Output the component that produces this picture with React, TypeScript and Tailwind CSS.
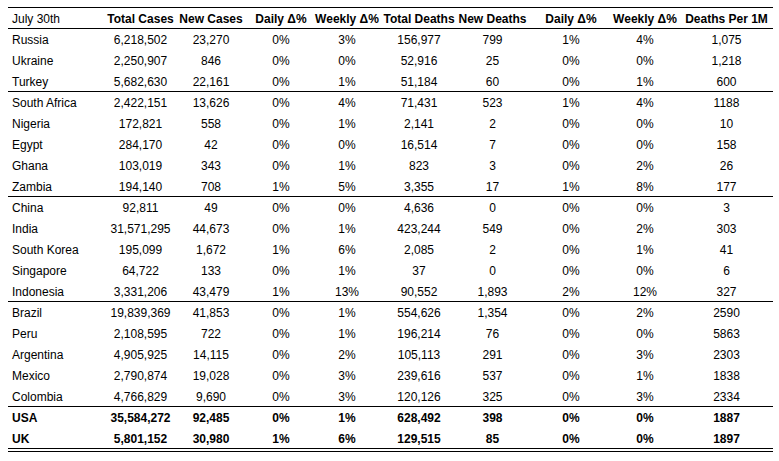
import React from "react";

type Row = [string, string, string, string, string, string, string, string, string, string];

const groups: Row[][] = [
  [
    ["Russia", "6,218,502", "23,270", "0%", "3%", "156,977", "799", "1%", "4%", "1,075"],
    ["Ukraine", "2,250,907", "846", "0%", "0%", "52,916", "25", "0%", "0%", "1,218"],
    ["Turkey", "5,682,630", "22,161", "0%", "1%", "51,184", "60", "0%", "1%", "600"],
  ],
  [
    ["South Africa", "2,422,151", "13,626", "0%", "4%", "71,431", "523", "1%", "4%", "1188"],
    ["Nigeria", "172,821", "558", "0%", "1%", "2,141", "2", "0%", "0%", "10"],
    ["Egypt", "284,170", "42", "0%", "0%", "16,514", "7", "0%", "0%", "158"],
    ["Ghana", "103,019", "343", "0%", "1%", "823", "3", "0%", "2%", "26"],
    ["Zambia", "194,140", "708", "1%", "5%", "3,355", "17", "1%", "8%", "177"],
  ],
  [
    ["China", "92,811", "49", "0%", "0%", "4,636", "0", "0%", "0%", "3"],
    ["India", "31,571,295", "44,673", "0%", "1%", "423,244", "549", "0%", "2%", "303"],
    ["South Korea", "195,099", "1,672", "1%", "6%", "2,085", "2", "0%", "1%", "41"],
    ["Singapore", "64,722", "133", "0%", "1%", "37", "0", "0%", "0%", "6"],
    ["Indonesia", "3,331,206", "43,479", "1%", "13%", "90,552", "1,893", "2%", "12%", "327"],
  ],
  [
    ["Brazil", "19,839,369", "41,853", "0%", "1%", "554,626", "1,354", "0%", "2%", "2590"],
    ["Peru", "2,108,595", "722", "0%", "1%", "196,214", "76", "0%", "0%", "5863"],
    ["Argentina", "4,905,925", "14,115", "0%", "2%", "105,113", "291", "0%", "3%", "2303"],
    ["Mexico", "2,790,874", "19,028", "0%", "3%", "239,616", "537", "0%", "1%", "1838"],
    ["Colombia", "4,766,829", "9,690", "0%", "3%", "120,126", "325", "0%", "3%", "2334"],
  ],
];

const totals: Row[] = [
  ["USA", "35,584,272", "92,485", "0%", "1%", "628,492", "398", "0%", "0%", "1887"],
  ["UK", "5,801,152", "30,980", "1%", "6%", "129,515", "85", "0%", "0%", "1897"],
];

const header: Row = [
  "July 30th",
  "Total Cases",
  "New Cases",
  "Daily Δ%",
  "Weekly Δ%",
  "Total Deaths",
  "New Deaths",
  "Daily Δ%",
  "Weekly Δ%",
  "Deaths Per 1M",
];

// per-column nudges so each column lines up with the screenshot
const cellCls = [
  "pl-[4px] text-left",
  "text-center",
  "text-center",
  "text-center pl-[2px]",
  "text-center pr-[3px]",
  "text-center",
  "text-center",
  "text-center pl-[5px]",
  "text-center pr-[1px]",
  "text-center pr-[4px]",
];

const gridCls =
  "grid grid-cols-[97px_71px_70px_68px_69px_72px_75px_77px_77px_89px] h-[21px] box-border pt-[2px] leading-[19px]";

function TableRow({ row, bold, last }: { row: Row; bold?: boolean; last?: boolean }) {
  return (
    <div className={`${gridCls} ${bold ? "font-bold" : ""} ${last ? "border-b border-black" : ""}`}>
      {row.map((c, i) => (
        <div key={i} className={`whitespace-nowrap ${cellCls[i]}`}>
          {c}
        </div>
      ))}
    </div>
  );
}

export default function App() {
  return (
    <div className="w-[779px] h-[461px] bg-white text-black font-['Liberation_Sans',Arial,sans-serif] text-[12px] pt-[7px] pl-[8px]">
      <div className="w-[765px]">
        <div className="border-t border-black">
          <div className="grid grid-cols-[97px_71px_70px_68px_69px_72px_75px_77px_77px_89px] h-[21px] box-border pt-[2px] leading-[18px] border-b border-black">
            {header.map((c, i) => (
              <div key={i} className={`whitespace-nowrap ${cellCls[i]} ${i > 0 ? "font-bold" : ""}`}>
                {c}
              </div>
            ))}
          </div>
        </div>

        {groups.map((g, gi) => (
          <div key={gi}>
            {g.map((r, ri) => (
              <TableRow key={ri} row={r} last={ri === g.length - 1} />
            ))}
          </div>
        ))}

        {/* totals, with the double rule underneath */}
        <div>
          {totals.map((r, ri) => (
            <TableRow key={ri} row={r} bold last={ri === totals.length - 1} />
          ))}
          <div className="mt-[2px] border-t border-black" />
        </div>
      </div>
    </div>
  );
}
